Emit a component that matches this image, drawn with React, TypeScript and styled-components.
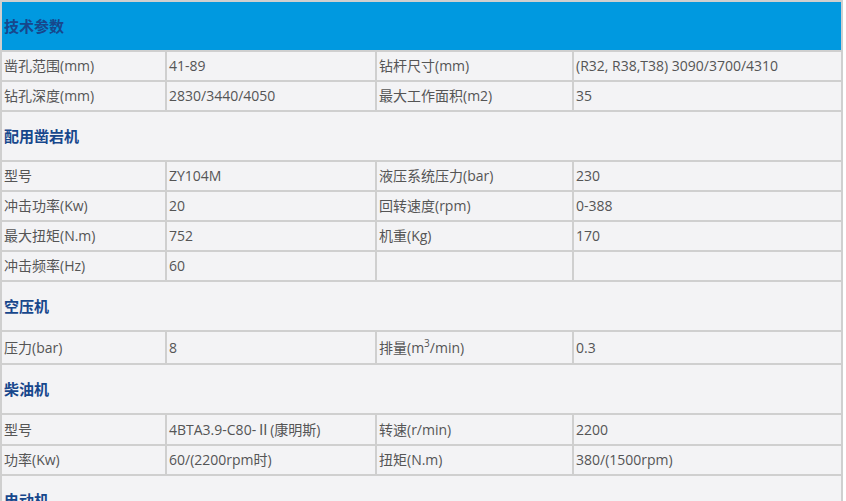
import styled, { createGlobalStyle } from "styled-components";

const GlobalStyle = createGlobalStyle`
    body {
        margin: 0;
        background-color: #ffffff;
        font-family: "Open Sans", "Noto Sans CJK SC", sans-serif;
    }
`

const StyledTable = styled.table`
    width: 843px;
    table-layout: fixed;
    border-collapse: collapse;
    background-color: #f3f3f5;
    color: #555555;
    font-size: 14px;
    line-height: 20px;

    td {
        border: 2px solid #cfcfcf;
        padding: 4px 2px;
        vertical-align: middle;
        white-space: nowrap;
        overflow: hidden;
    }

    sup {
        font-size: 10px;
        line-height: 0;
    }
`

const TallRow = styled.tr`
    td {
        padding-top: 6px;
        padding-bottom: 5px;
    }
`

const SectionCell = styled.td<{ $top?: boolean }>`
    && {
        padding: 14px 2px;
        background-color: ${(p) => (p.$top ? "#0099e0" : "#f3f3f5")};
    }
    font-size: 15px;
    font-weight: bold;
    color: #17478c;
`

const Roman = styled.span`
    font-family: "Noto Sans CJK SC", sans-serif;
`

type Row = [string, React.ReactNode, string, React.ReactNode]

const drill: Row[] = [
    ["型号", "ZY104M", "液压系统压力(bar)", "230"],
    ["冲击功率(Kw)", "20", "回转速度(rpm)", "0-388"],
    ["最大扭矩(N.m)", "752", "机重(Kg)", "170"],
    ["冲击频率(Hz)", "60", "", ""],
]

const diesel: Row[] = [
    ["型号", <>4BTA3.9-C80-<Roman>Ⅱ</Roman>(康明斯)</>, "转速(r/min)", "2200"],
    ["功率(Kw)", "60/(2200rpm时)", "扭矩(N.m)", "380/(1500rpm)"],
]

function DataRows({rows}: { rows: Row[] }) {
    return (
        <>
            {rows.map((r, i) => (
                <tr key={i}>
                    <td>{r[0]}</td>
                    <td>{r[1]}</td>
                    <td>{r[2]}</td>
                    <td>{r[3]}</td>
                </tr>
            ))}
        </>
    )
}

export default function App() {
    return (
        <>
            <GlobalStyle/>
            <StyledTable>
                <colgroup>
                    <col style={{width: 165}}/>
                    <col style={{width: 210}}/>
                    <col style={{width: 197}}/>
                    <col/>
                </colgroup>
                <tbody>
                    <tr><SectionCell colSpan={4} $top>技术参数</SectionCell></tr>
                    <DataRows rows={[
                        ["凿孔范围(mm)", "41-89", "钻杆尺寸(mm)", "(R32, R38,T38) 3090/3700/4310"],
                        ["钻孔深度(mm)", "2830/3440/4050", "最大工作面积(m2)", "35"],
                    ]}/>
                    <tr><SectionCell colSpan={4}>配用凿岩机</SectionCell></tr>
                    <DataRows rows={drill}/>
                    <tr><SectionCell colSpan={4}>空压机</SectionCell></tr>
                    <TallRow>
                        <td>压力(bar)</td>
                        <td>8</td>
                        <td>排量(m<sup>3</sup>/min)</td>
                        <td>0.3</td>
                    </TallRow>
                    <tr><SectionCell colSpan={4}>柴油机</SectionCell></tr>
                    <DataRows rows={diesel}/>
                    <tr><SectionCell colSpan={4}>电动机</SectionCell></tr>
                    <DataRows rows={[["功率(Kw)", "55", "电压(V)", "380"]]}/>
                </tbody>
            </StyledTable>
        </>
    );
}
